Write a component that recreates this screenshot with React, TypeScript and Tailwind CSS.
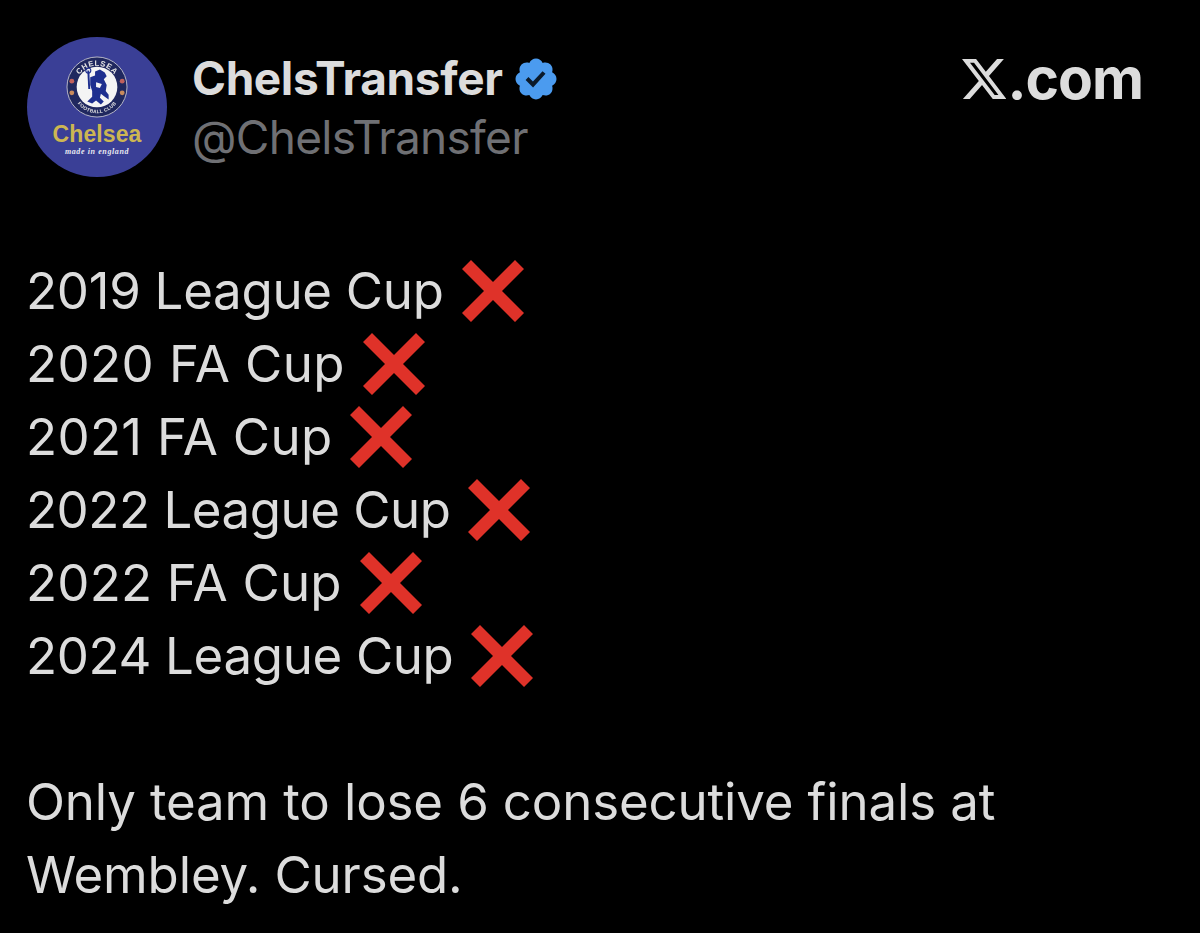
const finals = [
  { label: "2019 League Cup", track: "tracking-[-0.28px]" },
  { label: "2020 FA Cup", track: "tracking-[0.4px]" },
  { label: "2021 FA Cup", track: "tracking-[0.3px]" },
  { label: "2022 League Cup", track: "tracking-[-0.48px]" },
  { label: "2022 FA Cup", track: "tracking-[0.2px]" },
  { label: "2024 League Cup", track: "tracking-[-0.35px]" },
];

const Cross = () => (
  <svg viewBox="0 0 62 62" className="w-[62px] h-[62px] shrink-0 ml-[18px]">
    <path
      d="M9 0 L31 22 L53 0 L62 9 L40 31 L62 53 L53 62 L31 40 L9 62 L0 53 L22 31 L0 9 Z"
      fill="#df3229"
    />
  </svg>
);

const Crest = () => (
  <svg viewBox="0 0 64 64" className="w-[62px] h-[62px] blur-[0.4px]">
    <defs>
      <path id="top-arc" d="M10 32 A22 22 0 0 1 54 32" />
      <path id="bottom-arc" d="M7 34 A25 25 0 0 0 57 34" />
    </defs>
    <circle cx="32" cy="32" r="31" fill="#20285f" stroke="#b9b9c8" strokeWidth="1" />
    <circle cx="32" cy="32" r="21" fill="#f4f4f4" />
    <text fontSize="8" fontWeight="700" fill="#e4e4e4" fontFamily="Liberation Sans, sans-serif" letterSpacing="0.6">
      <textPath href="#top-arc" startOffset="50%" textAnchor="middle">CHELSEA</textPath>
    </text>
    <text fontSize="5" fontWeight="700" fill="#e4e4e4" fontFamily="Liberation Sans, sans-serif" letterSpacing="0.3">
      <textPath href="#bottom-arc" startOffset="50%" textAnchor="middle">FOOTBALL CLUB</textPath>
    </text>
    <circle cx="6" cy="26" r="2.5" fill="#c0605c" />
    <circle cx="58" cy="26" r="2.5" fill="#c0605c" />
    <circle cx="6" cy="38" r="2.5" fill="#c88a5c" />
    <circle cx="58" cy="38" r="2.5" fill="#c88a5c" />
    {/* lion with staff */}
    <path d="M22 15 L24 15 L25 34 L23 34 Z" fill="#1e2f8f" />
    <circle cx="23" cy="15" r="2.6" fill="none" stroke="#1e2f8f" strokeWidth="1.2" />
    <path
      d="M25 22 L30 20 L30 16 L35 14 L40 17 L42 21 L39 24 L42 30 L41 36 L44 40 L44 45 L40 42 L36 39 L35 43 L39 47 L36 50 L31 46 L27 49 L22 47 L27 42 L27 36 L25 30 Z"
      fill="#1e2f8f"
    />
    <path d="M31 27 L37 29 L35 33 L31 32 Z" fill="#f4f4f4" />
  </svg>
);

const Avatar = () => (
  <div className="w-[140px] h-[140px] shrink-0 rounded-full bg-[#3a3f96] flex flex-col items-center pt-[19px]">
    <Crest />
    <div className="mt-[3px] text-[#cdb652] text-[23px] leading-[26px] font-bold font-['Liberation_Sans',sans-serif] tracking-[0.1px]">
      Chelsea
    </div>
    <div className="text-[#e8e8f0] text-[8px] leading-[10px] italic font-bold font-['Liberation_Serif',serif] tracking-[0.6px]">
      made in england
    </div>
  </div>
);

const Badge = () => (
  <svg viewBox="0 0 24 24" className="w-[48px] h-[48px] ml-[10px] mt-[1px]">
    <path
      d="M22.25 12c0-1.43-.88-2.67-2.19-3.34.46-1.39.2-2.9-.81-3.91s-2.52-1.27-3.91-.81c-.66-1.31-1.91-2.19-3.34-2.19s-2.67.88-3.33 2.19c-1.4-.46-2.91-.2-3.92.81s-1.26 2.52-.8 3.91c-1.31.67-2.2 1.91-2.2 3.34s.89 2.67 2.2 3.34c-.46 1.39-.21 2.9.8 3.91s2.52 1.26 3.91.81c.67 1.31 1.91 2.19 3.34 2.19s2.68-.88 3.34-2.19c1.39.45 2.9.2 3.91-.81s1.27-2.52.81-3.91c1.31-.67 2.19-1.91 2.19-3.34z"
      fill="#4b9bef"
    />
    <path d="M10.54 16.2 6.8 12.46l1.41-1.42 2.26 2.26 4.8-5.23 1.47 1.36-6.2 6.77z" fill="#0b1a2b" />
  </svg>
);

const XLogo = () => (
  <svg viewBox="1.25 2.25 21.33 19.5" className="w-[44px] h-[42px]" fill="#dcdcdc">
    <path d="M18.244 2.25h3.308l-7.227 8.26 8.502 11.24H16.17l-5.214-6.817L4.99 21.75H1.68l7.73-8.835L1.254 2.25H8.08l4.713 6.231zm-1.161 17.52h1.833L7.084 4.126H5.117z" />
  </svg>
);

export default function App() {
  return (
    <div className="w-[1200px] h-[933px] bg-black overflow-hidden font-['Inter',sans-serif] text-[#dcdcdc]">
      {/* Header */}
      <div className="flex items-start pt-[37px] pl-[27px] pr-[57px]">
        <Avatar />
        <div className="ml-[25px] mt-[11px] flex-1">
          <div className="flex items-center h-[60px]">
            <span className="text-[46px] leading-[60px] font-bold tracking-[-0.4px]">ChelsTransfer</span>
            <Badge />
          </div>
          <div className="text-[46px] leading-[60px] mt-[-1px] text-[#6f7074] tracking-[-0.7px]">
            @ChelsTransfer
          </div>
        </div>
        <div className="flex items-center mt-[12px]">
          <XLogo />
          <span className="text-[57px] leading-[60px] font-bold tracking-[-1px] ml-[1px]">.com</span>
        </div>
      </div>

      {/* Tweet body */}
      <div className="mt-[77px] pl-[26px] text-[51px] leading-[73px] tracking-[-0.15px]">
        {finals.map((f) => (
          <div key={f.label} className="flex items-center h-[73px]">
            <span className={f.track}>{f.label}</span>
            <Cross />
          </div>
        ))}
        <div className="h-[73px]" />
        <div>Only team to lose 6 consecutive finals at</div>
        <div>Wembley. Cursed.</div>
      </div>
    </div>
  );
}
